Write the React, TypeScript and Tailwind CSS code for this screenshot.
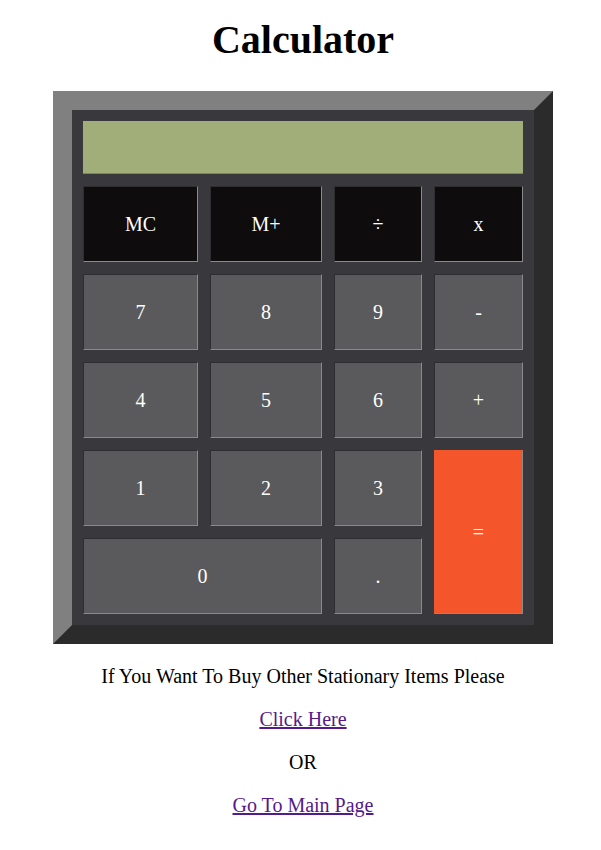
const keys = [
  { label: 'MC', kind: 'mem' },
  { label: 'M+', kind: 'mem' },
  { label: '÷', kind: 'mem' },
  { label: 'x', kind: 'mem' },
  { label: '7' },
  { label: '8' },
  { label: '9' },
  { label: '-' },
  { label: '4' },
  { label: '5' },
  { label: '6' },
  { label: '+' },
  { label: '1' },
  { label: '2' },
  { label: '3' },
  { label: '=', kind: 'eq' },
  { label: '0', kind: 'zero' },
  { label: '.' },
]

function Key({ label, kind }: { label: string; kind?: string }) {
  const base =
    'flex items-center justify-center text-white text-[20px] border border-t-[#2e2e30] border-l-[#2e2e30] border-b-[#8a8a8a] border-r-[#8a8a8a]'
  let color = 'bg-[#5a5a5c]'
  let span = ''
  if (kind === 'mem') color = 'bg-[#0e0c0d]'
  if (kind === 'eq') {
    color = 'bg-[#f5552b] border-t-[#f5552b] border-l-[#f5552b]'
    span = 'row-span-2'
  }
  if (kind === 'zero') span = 'col-span-2'
  return <button className={`${base} ${color} ${span}`}>{label}</button>
}

export default function App() {
  return (
    <div className="min-h-[850px] bg-white pl-[5px] font-['Liberation_Serif',serif] text-black">
      <h1 className="mt-[10px] mb-[21px] text-center text-[40px] font-bold leading-normal">Calculator</h1>

      <div className="mx-auto w-[500px] border-[19px] border-t-[#808080] border-l-[#808080] border-r-[#2b2b2b] border-b-[#2b2b2b]">
        <div className="bg-[#38383d] p-[11px]">
          <div className="h-[53px] bg-[#a2ae79] border-b border-[#7d8660]" />
          <div className="mt-[12px] grid grid-cols-[115px_112px_88px_89px] auto-rows-[76px] gap-[12px]">
            {keys.map((k) => (
              <Key key={k.label} label={k.label} kind={k.kind} />
            ))}
          </div>
        </div>
      </div>

      <div className="mt-[21px] text-center text-[20px] leading-[23px]">
        <p>If You Want To Buy Other Stationary Items Please</p>
        <p className="mt-[20px]">
          <a href="#" className="text-[#551a8b] underline">Click Here</a>
        </p>
        <p className="mt-[20px]">OR</p>
        <p className="mt-[20px]">
          <a href="#" className="text-[#551a8b] underline">Go To Main Page</a>
        </p>
      </div>
    </div>
  )
}
